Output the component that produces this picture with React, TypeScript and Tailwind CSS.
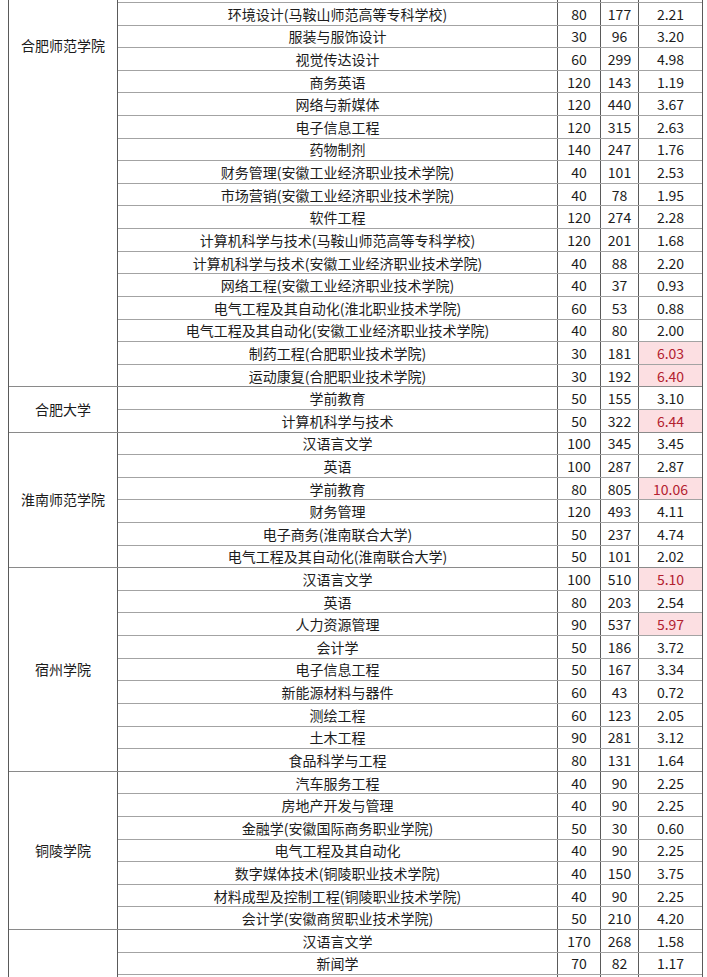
import React from 'react'

type Row = [string, number, number, string, boolean?]

interface Block {
  college: string
  top?: boolean
  rows: Row[]
}

const blocks: Block[] = [
  {
    college: '合肥师范学院',
    top: true,
    rows: [
      ['环境设计(马鞍山师范高等专科学校)', 80, 177, '2.21'],
      ['服装与服饰设计', 30, 96, '3.20'],
      ['视觉传达设计', 60, 299, '4.98'],
      ['商务英语', 120, 143, '1.19'],
      ['网络与新媒体', 120, 440, '3.67'],
      ['电子信息工程', 120, 315, '2.63'],
      ['药物制剂', 140, 247, '1.76'],
      ['财务管理(安徽工业经济职业技术学院)', 40, 101, '2.53'],
      ['市场营销(安徽工业经济职业技术学院)', 40, 78, '1.95'],
      ['软件工程', 120, 274, '2.28'],
      ['计算机科学与技术(马鞍山师范高等专科学校)', 120, 201, '1.68'],
      ['计算机科学与技术(安徽工业经济职业技术学院)', 40, 88, '2.20'],
      ['网络工程(安徽工业经济职业技术学院)', 40, 37, '0.93'],
      ['电气工程及其自动化(淮北职业技术学院)', 60, 53, '0.88'],
      ['电气工程及其自动化(安徽工业经济职业技术学院)', 40, 80, '2.00'],
      ['制药工程(合肥职业技术学院)', 30, 181, '6.03', true],
      ['运动康复(合肥职业技术学院)', 30, 192, '6.40', true],
    ],
  },
  {
    college: '合肥大学',
    rows: [
      ['学前教育', 50, 155, '3.10'],
      ['计算机科学与技术', 50, 322, '6.44', true],
    ],
  },
  {
    college: '淮南师范学院',
    rows: [
      ['汉语言文学', 100, 345, '3.45'],
      ['英语', 100, 287, '2.87'],
      ['学前教育', 80, 805, '10.06', true],
      ['财务管理', 120, 493, '4.11'],
      ['电子商务(淮南联合大学)', 50, 237, '4.74'],
      ['电气工程及其自动化(淮南联合大学)', 50, 101, '2.02'],
    ],
  },
  {
    college: '宿州学院',
    rows: [
      ['汉语言文学', 100, 510, '5.10', true],
      ['英语', 80, 203, '2.54'],
      ['人力资源管理', 90, 537, '5.97', true],
      ['会计学', 50, 186, '3.72'],
      ['电子信息工程', 50, 167, '3.34'],
      ['新能源材料与器件', 60, 43, '0.72'],
      ['测绘工程', 60, 123, '2.05'],
      ['土木工程', 90, 281, '3.12'],
      ['食品科学与工程', 80, 131, '1.64'],
    ],
  },
  {
    college: '铜陵学院',
    rows: [
      ['汽车服务工程', 40, 90, '2.25'],
      ['房地产开发与管理', 40, 90, '2.25'],
      ['金融学(安徽国际商务职业学院)', 50, 30, '0.60'],
      ['电气工程及其自动化', 40, 90, '2.25'],
      ['数字媒体技术(铜陵职业技术学院)', 40, 150, '3.75'],
      ['材料成型及控制工程(铜陵职业技术学院)', 40, 90, '2.25'],
      ['会计学(安徽商贸职业技术学院)', 50, 210, '4.20'],
    ],
  },
  {
    college: '',
    rows: [
      ['汉语言文学', 170, 268, '1.58'],
      ['新闻学', 70, 82, '1.17'],
      ['', 0, 0, ''],
    ],
  },
]

function DataRow({ row }: { row: Row }) {
  const [major, plan, apply, ratio, hot] = row
  const empty = major === ''
  return (
    <div className="flex h-[22.62px] border-b border-[#a3a3a3] last:border-b-0 last:h-[21.62px] text-[14px] leading-none text-[#1c1c1c]">
      <div className="w-[440px] flex items-center justify-center border-r border-[#5a5a5a]">{major}</div>
      <div className="w-[43px] flex items-center justify-center border-r border-[#5a5a5a]">{empty ? '' : plan}</div>
      <div className="w-[38px] flex items-center justify-center border-r border-[#5a5a5a]">{empty ? '' : apply}</div>
      <div className={`flex-1 flex items-center justify-center ${hot ? 'bg-[#fcdfe2] text-[#b3212f]' : ''}`}>{ratio}</div>
    </div>
  )
}

export default function App() {
  return (
    <div className="w-[707px] h-[977px] overflow-hidden bg-white" style={{ fontFamily: '"Noto Sans CJK SC", "Noto Sans", sans-serif' }}>
      <div className="ml-[8px] w-[695px] border-l border-r border-[#5a5a5a]">
        {blocks.map((b, bi) => (
          <div key={bi} className="flex border-b border-[#8a8a8a]">
            <div
              className={`w-[109px] shrink-0 flex justify-center border-r border-[#5a5a5a] text-[14px] text-[#1c1c1c] ${
                b.top ? 'items-start pt-[35px]' : 'items-center'
              }`}
            >
              {b.college}
            </div>
            <div className="flex-1">
              {b.top && (
                <div className="flex h-[3px] border-b border-[#a3a3a3]">
                  <div className="w-[440px] border-r border-[#5a5a5a]" />
                  <div className="w-[43px] border-r border-[#5a5a5a]" />
                  <div className="w-[38px] border-r border-[#5a5a5a]" />
                  <div className="flex-1" />
                </div>
              )}
              {b.rows.map((r, ri) => (
                <DataRow key={ri} row={r} />
              ))}
            </div>
          </div>
        ))}
      </div>
    </div>
  )
}
